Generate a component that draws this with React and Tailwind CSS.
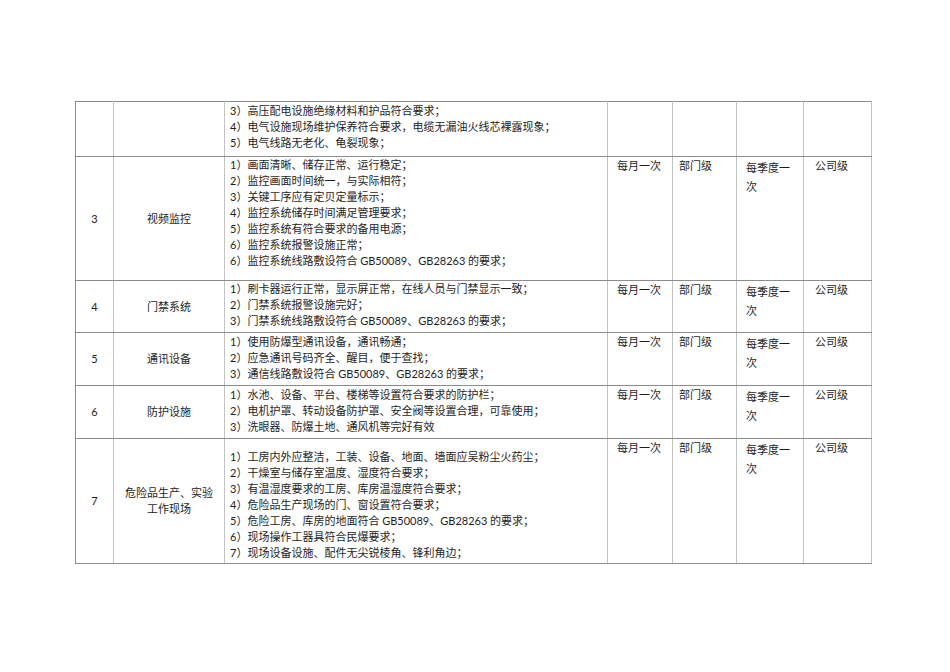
import React from "react";

const rows = [
  {
    h: "h-[55px]",
    num: "",
    name: [""],
    pt: "pt-[1px]",
    desc: [
      "3）高压配电设施绝缘材料和护品符合要求；",
      "4）电气设施现场维护保养符合要求，电缆无漏油火线芯裸露现象；",
      "5）电气线路无老化、龟裂现象；",
    ],
    empty: true,
  },
  {
    h: "h-[124px]",
    num: "3",
    name: ["视频监控"],
    pt: "pt-[0px]",
    desc: [
      "1）画面清晰、储存正常、运行稳定；",
      "2）监控画面时间统一，与实际相符；",
      "3）关键工序应有定贝定量标示；",
      "4）监控系统储存时间满足管理要求；",
      "5）监控系统有符合要求的备用电源；",
      "6）监控系统报警设施正常；",
      "6）监控系统线路敷设符合 GB50089、GB28263 的要求；",
    ],
  },
  {
    h: "h-[52px]",
    num: "4",
    name: ["门禁系统"],
    pt: "pt-[0px]",
    desc: [
      "1）刷卡器运行正常，显示屏正常，在线人员与门禁显示一致；",
      "2）门禁系统报警设施完好；",
      "3）门禁系统线路敷设符合 GB50089、GB28263 的要求；",
    ],
  },
  {
    h: "h-[53px]",
    num: "5",
    name: ["通讯设备"],
    pt: "pt-[1px]",
    desc: [
      "1）使用防爆型通讯设备，通讯畅通；",
      "2）应急通讯号码齐全、醒目，便于查找；",
      "3）通信线路敷设符合 GB50089、GB28263 的要求；",
    ],
  },
  {
    h: "h-[53px]",
    num: "6",
    name: ["防护设施"],
    pt: "pt-[1px]",
    desc: [
      "1）水池、设备、平台、楼梯等设置符合要求的防护栏；",
      "2）电机护罩、转动设备防护罩、安全阀等设置合理，可靠使用；",
      "3）洗眼器、防爆土地、通风机等完好有效",
    ],
  },
  {
    h: "h-[125px]",
    num: "7",
    name: ["危险品生产、实验", "工作现场"],
    pt: "pt-[10px]",
    desc: [
      "1）工房内外应整洁，工装、设备、地面、墙面应吴粉尘火药尘；",
      "2）干燥室与储存室温度、湿度符合要求；",
      "3）有温湿度要求的工房、库房温湿度符合要求；",
      "4）危险品生产现场的门、窗设置符合要求；",
      "5）危险工房、库房的地面符合 GB50089、GB28263 的要求；",
      "6）现场操作工器具符合民爆要求；",
      "7）现场设备设施、配件无尖锐棱角、锋利角边；",
    ],
  },
];

const cell =
  "border-x border-y border-x-[#c2c2c2] border-y-[#8c8c8c] p-0";

export default function App() {
  return (
    <div
      className="w-[950px] h-[672px] bg-white pt-[101px] pl-[75px] text-[#1e1e1e] text-[11px] leading-[16px]"
      style={{ fontFamily: 'Lato, "Noto Sans CJK SC", sans-serif' }}
    >
      <table className="border-collapse table-fixed w-[796px]">
        <colgroup>
          <col className="w-[38px]" />
          <col className="w-[111px]" />
          <col className="w-[383px]" />
          <col className="w-[65px]" />
          <col className="w-[64px]" />
          <col className="w-[67px]" />
          <col className="w-[68px]" />
        </colgroup>
        <tbody>
          {rows.map((r, i) => (
            <tr key={i} className={r.h}>
              <td className={`${cell} border-l-[#8c8c8c] text-center align-middle`}>
                {r.num}
              </td>
              <td className={`${cell} text-center align-middle leading-[16px]`}>
                {r.name.map((n, j) => (
                  <div key={j}>{n}</div>
                ))}
              </td>
              <td className={`${cell} align-top pl-[5px] ${r.pt}`}>
                {r.desc.map((d, j) => (
                  <div key={j} className="whitespace-nowrap">
                    {d}
                  </div>
                ))}
              </td>
              <td className={`${cell} align-top pl-[9px] pt-[1px]`}>
                {r.empty ? "" : "每月一次"}
              </td>
              <td className={`${cell} align-top pl-[6px] pt-[1px]`}>
                {r.empty ? "" : "部门级"}
              </td>
              <td className={`${cell} align-top pl-[9px] pt-[1px] leading-[19px]`}>
                {r.empty ? null : (
                  <>
                    <div>每季度一</div>
                    <div>次</div>
                  </>
                )}
              </td>
              <td className={`${cell} align-top pl-[11px] pt-[1px]`}>
                {r.empty ? "" : "公司级"}
              </td>
            </tr>
          ))}
        </tbody>
      </table>
    </div>
  );
}
